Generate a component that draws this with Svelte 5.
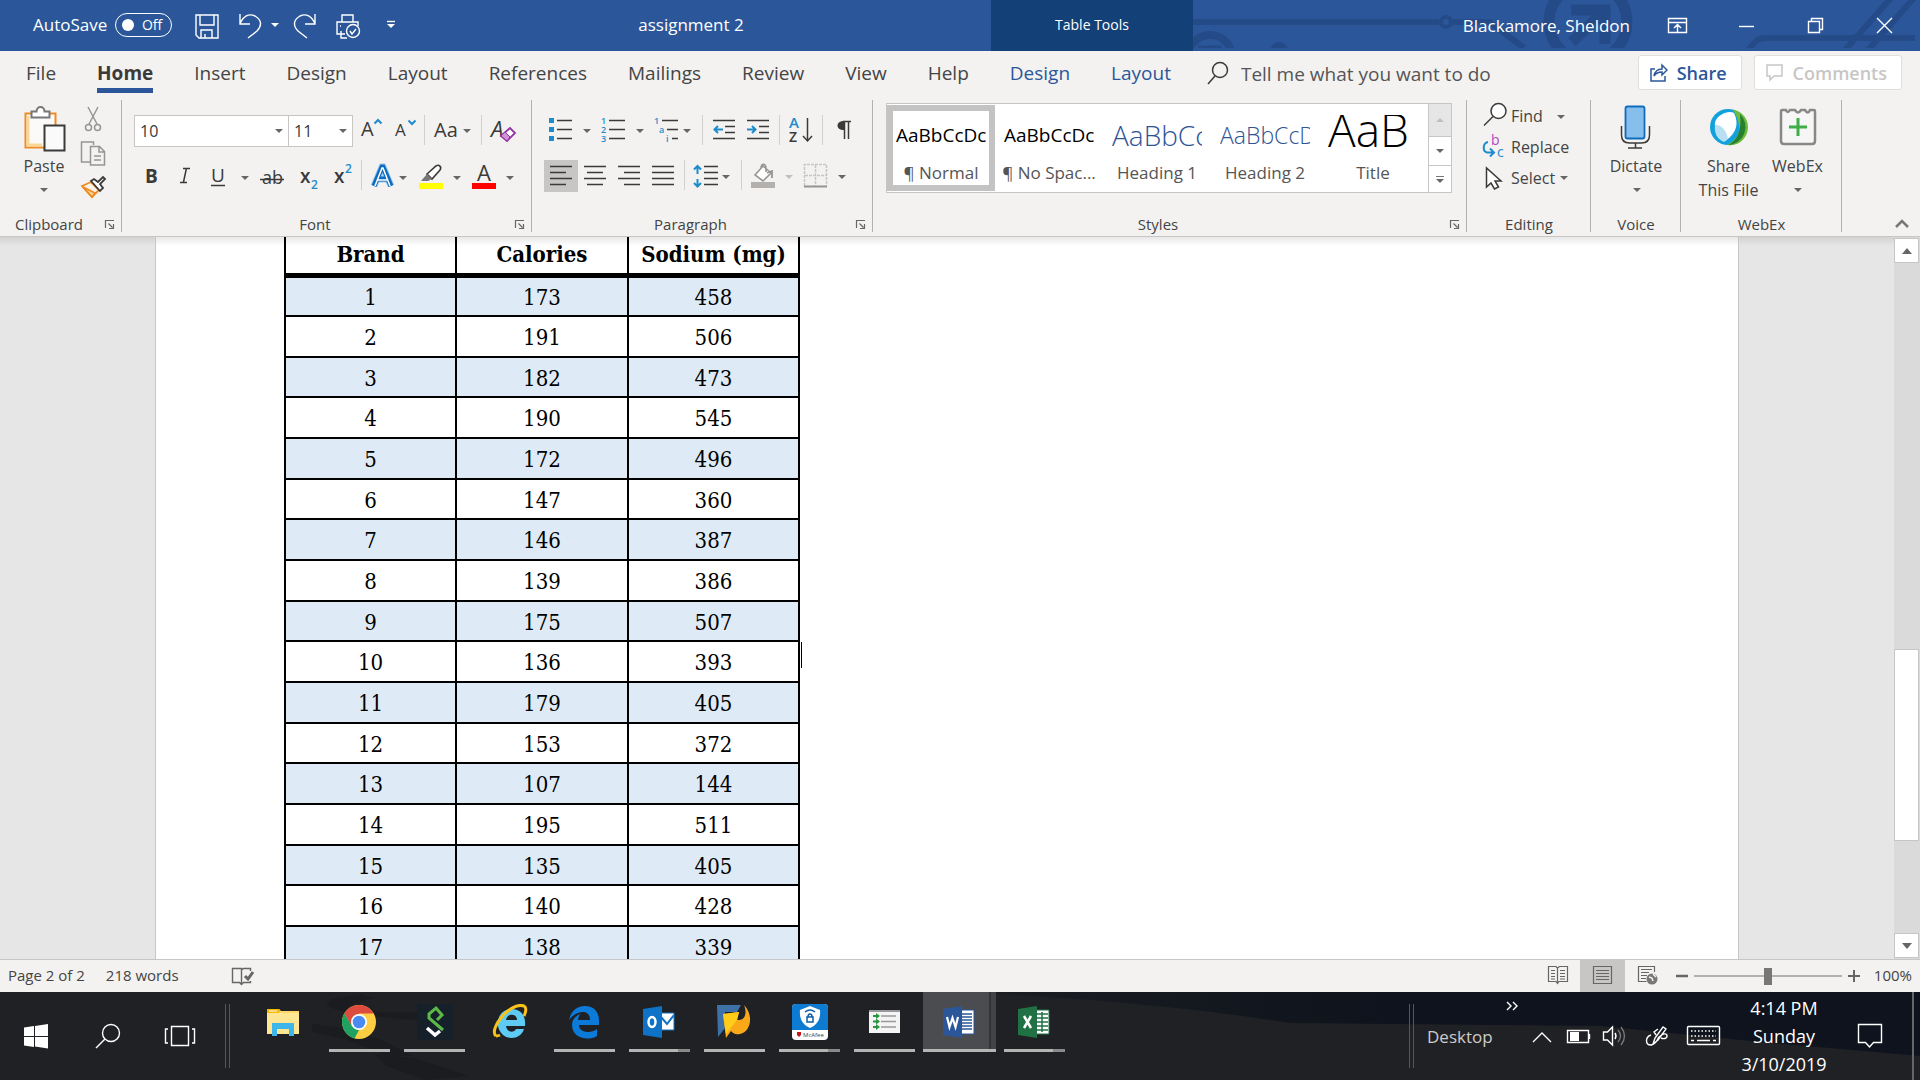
<script>
  const tabs = ['File', 'Home', 'Insert', 'Design', 'Layout', 'References', 'Mailings', 'Review', 'View', 'Help'];
  const toolTabs = ['Design', 'Layout'];
  const styles = [
    { sample: 'AaBbCcDc', name: '¶ Normal', kind: 'body', active: true },
    { sample: 'AaBbCcDc', name: '¶ No Spac...', kind: 'body' },
    { sample: 'AaBbCc', name: 'Heading 1', kind: 'h1' },
    { sample: 'AaBbCcD', name: 'Heading 2', kind: 'h2' },
    { sample: 'AaB', name: 'Title', kind: 'title' }
  ];
  const rows = [
    [173, 458], [191, 506], [182, 473], [190, 545], [172, 496], [147, 360],
    [146, 387], [139, 386], [175, 507], [136, 393], [179, 405], [153, 372],
    [107, 144], [195, 511], [135, 405], [140, 428], [138, 339]
  ];
  let zoom = $state(50);
</script>

{#snippet caret(x, y)}
  <path class="caret" d="M{x} {y}h8l-4 4z" />
{/snippet}

{#snippet footer(label, launcher)}
  <div class="foot">
    <span>{label}</span>
    {#if launcher}
      <button aria-label="{label} settings">
        <svg width="24" height="24" viewBox="0 0 24 24"><path d="M7.500 16V8.500H16M10.500 11.500l4 4M15.500 12v4.500H11" class="thin" /></svg>
      </button>
    {/if}
  </div>
{/snippet}

<div class="app">
  <header class="title">
    <div class="quick">
      <label class="auto">AutoSave <input type="checkbox" /><span class="switch">Off</span></label>
      <button aria-label="Save"><svg width="28" height="28" viewBox="193 12 28 28" class="w"><path d="M196 15h22v23h-19l-3-3zM200 15v10h14V15M201 38v-8h11v8M205 34v4" /></svg></button>
      <button aria-label="Undo"><svg width="49" height="28" viewBox="231 12 49 28" class="w"><path d="M240 14v10h10M240 24c3-8 9-11 15-8 7 4 7 10 2 15l-9 7" /><path class="fill" d="M271 23h8l-4 4z" /></svg></button>
      <button aria-label="Redo"><svg width="33" height="28" viewBox="290 12 33 28" class="w"><path d="M315 14v10h-10M315 24c-3-8-9-11-15-8-7 4-7 10-2 15l9 7" /></svg></button>
      <button aria-label="Print preview"><svg width="37" height="28" viewBox="333 12 37 28" class="w"><path d="M342 22v-7h11v7M345 34h-8V22h21v4M341 31v7h6M340 26h1" /><circle cx="353" cy="31" r="6.500" /><path d="M350 31l2 3 4-5" /></svg></button>
      <button aria-label="Customize toolbar"><svg width="16" height="28" viewBox="380 12 16 28" class="w"><path d="M387 21.500h8" /><path class="fill" d="M387 24h8l-4 4z" /></svg></button>
    </div>
    <h1>assignment 2</h1>
    <div class="context">Table Tools</div>
    <div class="user">
      <svg class="circuit" width="727" height="51" viewBox="1193 0 727 51" aria-hidden="true">
        <g fill="none" stroke="#244b88" stroke-width="6">
          <path d="M1193 22h246M1453 22h37l34 26" /><circle cx="1446" cy="22" r="5" stroke-width="4" />
          <circle cx="1210" cy="57" r="22" stroke-width="8" /><path d="M1198 47h24" stroke-width="3" /><circle cx="1279" cy="51" r="6" />
          <circle cx="1588" cy="22" r="39" stroke-width="11" />
          <path d="M1572 42l32-31M1571 10h34v34" stroke-width="11" />
          <path d="M1748 50l7-8q4-4 10-4h150M1845 50l46-52M1868 50l46-52" />
        </g>
        <path d="M1193 48h727v3h-727z" fill="#2b579a" />
      </svg>
      <span class="name">Blackamore, Sheldon</span>
      <div class="win">
        <button aria-label="Ribbon display options"><svg width="69" height="30" viewBox="1643 10 69 30" class="w"><path d="M1668.500 17.500h18v14h-18zM1668 21.500h18M1677.500 31v-7M1674 27l3.500-3.500L1681 27" /></svg></button>
        <button aria-label="Minimize"><svg width="69" height="30" viewBox="1712 10 69 30" class="w"><path d="M1739 25.500h15" /></svg></button>
        <button aria-label="Restore"><svg width="69" height="30" viewBox="1781 10 69 30" class="w"><path d="M1808.500 20.500h11v11h-11zM1811.500 20v-2.500h11v11H1820" /></svg></button>
        <button aria-label="Close"><svg width="70" height="30" viewBox="1850 10 70 30" class="w"><path d="M1877 17l15 15M1892 17l-15 15" /></svg></button>
      </div>
    </div>
  </header>

  <nav class="tabs">
    {#each tabs as t}<button class="tab" class:on={t === 'Home'}>{t}</button>{/each}
    {#each toolTabs as t}<button class="tab ctx">{t}</button>{/each}
    <label class="tell">
      <svg width="22" height="26" viewBox="0 0 22 26" class="line"><circle cx="13" cy="9" r="7.500" /><path d="M8 15l-7 8" /></svg>
      <input type="text" placeholder="Tell me what you want to do" />
    </label>
    <div class="acts">
      <button class="share"><svg width="18" height="20" viewBox="0 0 18 20"><path d="M5 6H1v12h14v-5M4 13c1-5 4-7 8-7V2l5 5-5 5V9c-4 0-6 1-8 4z" fill="none" stroke="#2b579a" stroke-width="1.500" /></svg>Share</button>
      <button class="comments"><svg width="18" height="20" viewBox="0 0 18 20"><path d="M1 2h15v11H8l-4 4v-4H1z" fill="none" stroke="#c8c6c4" stroke-width="1.500" /></svg>Comments</button>
    </div>
  </nav>

  <section class="ribbon">
    <div class="group clip">
      <div class="tools">
        <button class="big paste">
          <svg width="48" height="52" viewBox="23 102 48 52">
            <path d="M28.500 113.500h30v34h-30z" fill="#fbfaf8" stroke="#f08a24" stroke-width="2" /><path d="M31 116v29h14" fill="none" stroke="#fad796" stroke-width="3" />
            <path d="M34.500 117.500v-6h5c0-6 8-6 8 0h5v6z" fill="#fff" stroke="#777" stroke-width="2" />
            <path d="M47.500 125.500h20v25h-20z" fill="#fafafa" stroke="#3b3a39" stroke-width="2" />
          </svg>
          <span>Paste</span>
          <svg width="16" height="22" viewBox="0 0 16 22">{@render caret(4, 10)}</svg>
        </button>
        <div class="minis">
          <button aria-label="Cut"><svg width="30" height="34" viewBox="77 102 30 34" fill="none" stroke="#979593" stroke-width="1.500"><path d="M88 107l9 17M98 107l-9 17" /><circle cx="88.500" cy="127.500" r="3" /><circle cx="97.500" cy="127.500" r="3" /></svg></button>
          <button aria-label="Copy"><svg width="30" height="34" viewBox="77 137 30 34" fill="#f3f2f1" stroke="#979593" stroke-width="1.500"><path d="M90 163h-8.500v-20h12v3" /><path d="M90.500 147.500h9l5 5v13.500h-14zM99 148v5h5M94 157h7M94 161h7" /></svg></button>
          <button aria-label="Format Painter"><svg width="30" height="34" viewBox="77 171 30 34" stroke-width="1.800"><path d="M82 187l9-4 8 8-7 7z" fill="#fbf3e6" stroke="#f08a24" /><path d="M83 188l9 10 3-4z" fill="#fad796" stroke="#f08a24" /><path d="M91 182l3-2 4 3 5-5 2 2-5 5 3 4-3 3z" fill="#fff" stroke="#3b3a39" /></svg></button>
        </div>
      </div>
      {@render footer('Clipboard', true)}
    </div>

    <div class="group font">
      <div class="tools rows">
        <div class="row">
          <label class="combo wide"><select aria-label="Font name"><option>10</option></select><svg width="16" height="30" viewBox="0 0 16 30">{@render caret(3, 13)}</svg></label>
          <label class="combo"><select aria-label="Font size"><option>11</option></select><svg width="16" height="30" viewBox="0 0 16 30">{@render caret(3, 13)}</svg></label>
          <button aria-label="Grow font"><svg width="35" height="32" viewBox="353 115 35 32"><text x="361" y="136" font-size="20">A</text><path class="blue" d="M374.500 123.500l3.500-3.500 3.500 3.500" /></svg></button>
          <button aria-label="Shrink font"><svg width="36" height="32" viewBox="388 115 36 32"><text x="395" y="136" font-size="17">A</text><path class="blue" d="M408.500 120.500l3.500 3.500 3.500-3.500" /></svg></button>
          <i class="sep"></i>
          <button aria-label="Change case"><svg width="56" height="32" viewBox="425 115 56 32"><text x="434" y="137" font-size="20">Aa</text>{@render caret(463, 129)}</svg></button>
          <i class="sep"></i>
          <button aria-label="Clear formatting"><svg width="38" height="32" viewBox="482 115 38 32"><text x="491" y="137" font-size="22" font-style="italic">A</text><path d="M501 136l9-8 5 5-8 8z" fill="#fff" stroke="#9332a3" stroke-width="1.800" /><path d="M501 136l4-4 5 5-3 4z" fill="#cf93d6" stroke="#9332a3" /></svg></button>
        </div>
        <div class="row">
          <button aria-label="Bold"><svg width="34" height="32" viewBox="134 160 34 32"><text x="145" y="183" font-size="19" font-weight="700">B</text></svg></button>
          <button aria-label="Italic"><svg width="34" height="32" viewBox="168 160 34 32"><path class="line" d="M183 168.500h7M180 182.500h7M186.500 168l-3 14" /></svg></button>
          <button aria-label="Underline"><svg width="52" height="32" viewBox="202 160 52 32"><text x="211" y="182" font-size="19">U</text><path class="line" d="M211 185.500h14" />{@render caret(241, 176)}</svg></button>
          <button aria-label="Strikethrough"><svg width="35" height="32" viewBox="254 160 35 32"><text x="262" y="184" font-size="18">ab</text><path class="line" d="M260 179.500h24" /></svg></button>
          <button aria-label="Subscript"><svg width="36" height="32" viewBox="289 160 36 32"><text x="300" y="183" font-size="19" font-weight="600">x</text><text x="311" y="189" font-size="12" class="b">2</text></svg></button>
          <button aria-label="Superscript"><svg width="36" height="32" viewBox="325 160 36 32"><text x="334" y="183" font-size="19" font-weight="600">x</text><text x="345" y="173" font-size="12" class="b">2</text></svg></button>
          <i class="sep"></i>
          <button aria-label="Text effects"><svg width="50" height="32" viewBox="362 160 50 32"><path d="M374 186l8-19h1l8 19M377 179h11" fill="none" stroke="#9fcbf0" stroke-width="7" /><path d="M374 186l8-19h1l8 19M377 179h11" fill="none" stroke="#0f6cbd" stroke-width="5" /><path d="M375 186l7-18h1l7 18M377 180h11" fill="none" stroke="#fff" stroke-width="1.500" />{@render caret(399, 176)}</svg></button>
          <button aria-label="Highlight color"><svg width="54" height="32" viewBox="412 160 54 32"><path d="M419 183h24v6h-24z" fill="#ff0" /><path d="M427 174l9-8c3-2 6 1 4 4l-8 9z" fill="#fff" stroke="#3b3a39" stroke-width="1.600" /><path d="M427 174l5 5-4 2h-7z" fill="#777" />{@render caret(453, 176)}</svg></button>
          <button aria-label="Font color"><svg width="54" height="32" viewBox="466 160 54 32"><path d="M472 183h24v6h-24z" fill="red" /><text x="477" y="181" font-size="22">A</text>{@render caret(506, 176)}</svg></button>
        </div>
      </div>
      {@render footer('Font', true)}
    </div>

    <div class="group para">
      <div class="tools rows">
        <div class="row">
          <button aria-label="Bullets"><svg width="53" height="32" viewBox="544 115 53 32"><path d="M549 118h5v5h-5zM549 127h5v5h-5zM549 136h5v5h-5z" fill="#1e8bcd" /><path class="line" d="M557 120.500h15M557 129.500h15M557 138.500h15" />{@render caret(583, 129)}</svg></button>
          <button aria-label="Numbering"><svg width="53" height="32" viewBox="597 115 53 32"><g class="b" font-size="9"><text x="601" y="124">1</text><text x="601" y="133">2</text><text x="601" y="142">3</text></g><path class="line" d="M609 120.500h16M609 129.500h16M609 138.500h16" />{@render caret(636, 129)}</svg></button>
          <button aria-label="Multilevel list"><svg width="52" height="32" viewBox="650 115 52 32"><g class="b" font-size="9"><text x="654" y="124">1</text><text x="659" y="133">a</text><text x="666" y="142">i</text></g><path class="line" d="M662 120.500h16M667 129.500h11M672 138.500h6" />{@render caret(683, 129)}</svg></button>
          <i class="sep"></i>
          <button aria-label="Decrease indent"><svg width="38" height="32" viewBox="703 115 38 32"><path class="line" d="M713 120.500h22M713 138.500h22M725 126.500h10M725 132.500h10" /><path class="blue" d="M723 129.500h-8M718 126l-3.500 3.500L718 133" /></svg></button>
          <button aria-label="Increase indent"><svg width="38" height="32" viewBox="741 115 38 32"><path class="line" d="M747 120.500h22M747 138.500h22M759 126.500h10M759 132.500h10" /><path class="blue" d="M747 129.500h8M752 126l3.500 3.500L752 133" /></svg></button>
          <i class="sep"></i>
          <button aria-label="Sort"><svg width="42" height="32" viewBox="780 115 42 32"><text x="789" y="128" font-size="15" class="b">A</text><text x="789" y="142" font-size="14" font-weight="600">Z</text><path class="line" d="M807.500 118v23M803 136l4.500 5 4.500-5" /></svg></button>
          <i class="sep"></i>
          <button aria-label="Show marks"><svg width="38" height="32" viewBox="823 115 38 32"><path d="M843 121.500h8M844.500 122v17M848.500 122v17" class="line" /><path d="M845 121c-10-1-10 10 0 9z" fill="#3b3a39" /></svg></button>
        </div>
        <div class="row">
          <button class="pressed" aria-label="Align left"><svg width="34" height="32" viewBox="544 160 34 32"><path class="line" d="M550 166.500h22M550 172.500h16M550 178.500h22M550 184.500h16" /></svg></button>
          <button aria-label="Center"><svg width="34" height="32" viewBox="578 160 34 32"><path class="line" d="M584 166.500h22M587 172.500h16M584 178.500h22M587 184.500h16" /></svg></button>
          <button aria-label="Align right"><svg width="34" height="32" viewBox="612 160 34 32"><path class="line" d="M618 166.500h22M624 172.500h16M618 178.500h22M624 184.500h16" /></svg></button>
          <button aria-label="Justify"><svg width="38" height="32" viewBox="646 160 38 32"><path class="line" d="M652 166.500h22M652 172.500h22M652 178.500h22M652 184.500h22" /></svg></button>
          <i class="sep"></i>
          <button aria-label="Line spacing"><svg width="56" height="32" viewBox="685 160 56 32"><path class="blue" d="M697.500 166v8M697.500 179v8M694 169.500l3.500-3.500 3.500 3.500M694 183l3.500 3.500 3.500-3.500" /><path class="line" d="M704 166.500h14M704 172.500h14M704 178.500h14M704 184.500h14" />{@render caret(722, 175)}</svg></button>
          <i class="sep"></i>
          <button aria-label="Shading"><svg width="55" height="32" viewBox="742 160 55 32"><path d="M751 182h24v6h-24z" fill="#b3b0ad" /><path d="M755 175l8-9 8 7-8 8zM761 168c0-5 5-5 5 1v3" fill="#fff" stroke="#979593" stroke-width="1.600" /><path d="M767 173l5-2v7" fill="none" stroke="#979593" stroke-width="1.800" /><path d="M785 175h8l-4 4z" fill="#c1bfbd" /></svg></button>
          <button aria-label="Borders"><svg width="60" height="32" viewBox="797 160 60 32"><path d="M804.500 186v-21.500h22V186M805 175.500h21M815.500 165v21" fill="none" stroke="#c8c6c4" stroke-width="1.500" stroke-dasharray="3 1" /><path d="M804 186.500h23" stroke="#979593" stroke-width="2" />{@render caret(838, 175)}</svg></button>
        </div>
      </div>
      {@render footer('Paragraph', true)}
    </div>

    <div class="group styles">
      <div class="tools">
        <div class="gallery">
          <div class="cells">
            {#each styles as s}
              <button class="cell" class:active={s.active}><span class="sample {s.kind}">{s.sample}</span><span class="sname">{s.name}</span></button>
            {/each}
          </div>
          <div class="scrolls">
            <button class="off" aria-label="Previous styles"><svg width="10" height="8" viewBox="0 0 10 8"><path d="M1 6h8L5 2z" fill="#c1bfbd" /></svg></button>
            <button aria-label="Next styles"><svg width="10" height="8" viewBox="0 0 10 8">{@render caret(1, 2)}</svg></button>
            <button aria-label="More styles"><svg width="10" height="10" viewBox="0 0 10 10"><path d="M1 1.500h8" stroke="#777" />{@render caret(1, 4)}</svg></button>
          </div>
        </div>
      </div>
      {@render footer('Styles', true)}
    </div>

    <div class="group edit">
      <div class="tools list">
        <button><svg width="28" height="30" viewBox="1482 101 28 30"><circle cx="1498.500" cy="111" r="7.500" fill="#fff" stroke="#3b3a39" stroke-width="1.500" /><path class="line" d="M1493 116.500l-9 9" /></svg>Find<svg width="24" height="30" viewBox="0 0 24 30">{@render caret(14, 14)}</svg></button>
        <button><svg width="28" height="30" viewBox="1482 132 28 30"><text x="1491" y="145" font-size="14" class="keep">b</text><text x="1497" y="157" font-size="14" class="b thinb">c</text><path class="blue" d="M1488 142c-5 1-6 9-1 10.500h7M1490 148.500l4 4-4 4" /></svg>Replace</button>
        <button><svg width="28" height="30" viewBox="1482 163 28 30"><path d="M1486.500 168v19l4.500-4 3.500 6 4-2-3.500-6h6z" fill="#fff" stroke="#3b3a39" stroke-width="1.500" /></svg>Select<svg width="16" height="30" viewBox="0 0 16 30">{@render caret(5, 13)}</svg></button>
      </div>
      {@render footer('Editing', false)}
    </div>

    <div class="group voice">
      <div class="tools">
        <button class="big">
          <svg width="48" height="52" viewBox="1612 102 48 52"><rect x="1625.500" y="106.500" width="19" height="32" rx="2" fill="#86bfec" stroke="#0f6cbd" stroke-width="1.800" /><path class="line" d="M1621.500 126v9q0 8 8 8h12q8 0 8-8v-9M1635.500 143v5M1628 148h14" /></svg>
          <span>Dictate</span>
          <svg width="16" height="22" viewBox="0 0 16 22">{@render caret(5, 10)}</svg>
        </button>
      </div>
      {@render footer('Voice', false)}
    </div>

    <div class="group webex">
      <div class="tools">
        <button class="big">
          <svg width="48" height="52" viewBox="1706 102 48 52"><circle cx="1729" cy="127" r="18" fill="#12a1dc" /><path d="M1734 109.500a18 18 0 0 1-6 35.500c14-8 16-18 6-35.500z" fill="#6dbb3f" /><path d="M1741 114a18 18 0 0 1-12 31c9-4 14-14 12-31z" fill="#27802f" /><path d="M1716 122c3-8 14-12 19-9 5 10 3 20-9 28-7-3-11-10-10-19z" fill="#fff" /><path d="M1716 125c8-1 12 8 13 14l-4 3c-7-3-10-9-9-17z" fill="#b8dff2" /></svg>
          <span>Share</span><span>This File</span>
        </button>
        <button class="big">
          <svg width="48" height="52" viewBox="1774 102 48 52"><path d="M1782 110h4q1 4 4 0h5q3 5 6 0h4q3 5 5 0h4q1 0 1 2v29q0 3-3 3h-28q-3 0-3-3v-29q0-2 1-2z" fill="#f6f6f6" stroke="#8a8886" stroke-width="2.500" /><path d="M1798 118v18M1789 127h18" stroke="#3fae49" stroke-width="3" /></svg>
          <span>WebEx</span>
          <svg width="16" height="22" viewBox="0 0 16 22">{@render caret(4, 10)}</svg>
        </button>
      </div>
      {@render footer('WebEx', false)}
    </div>
    <button class="collapse" aria-label="Collapse ribbon"><svg width="16" height="10" viewBox="0 0 16 10"><path d="M2 8l6-6 6 6" fill="none" stroke="#777" stroke-width="2.500" /></svg></button>
  </section>

  <main>
    <div class="canvas">
      <article class="page">
        <table>
          <thead><tr><th scope="col">Brand</th><th scope="col">Calories</th><th scope="col">Sodium (mg)</th></tr></thead>
          <tbody>
            {#each rows as [cal, sodium], i}
              <tr><td>{i + 1}</td><td>{cal}</td><td>{sodium}</td></tr>
            {/each}
          </tbody>
        </table>
        <span class="cursor"></span>
      </article>
    </div>
    <div class="scroll">
      <button aria-label="Scroll up"><svg width="12" height="8" viewBox="0 0 12 8"><path d="M1 7h10L6 1z" fill="#666" /></svg></button>
      <span class="before"></span><span class="thumb"></span><span class="after"></span>
      <button aria-label="Scroll down"><svg width="12" height="8" viewBox="0 0 12 8"><path d="M1 1h10L6 7z" fill="#666" /></svg></button>
    </div>
  </main>

  <footer class="status">
    <span>Page 2 of 2</span><span>218 words</span>
    <button class="proof" aria-label="Proofing"><svg width="24" height="22" viewBox="0 0 24 22"><path d="M10.500 19V3.500h-9v14h7l2 2 2-2h7V16M10.500 5l2-1.500h7V6" fill="none" stroke="#666" stroke-width="1.400" /><path d="M14 11l3 3 5-7" fill="none" stroke="#666" stroke-width="3" /></svg></button>
    <div class="views">
      <button aria-label="Read mode"><svg width="45" height="32" viewBox="1536 960 45 32"><path d="M1558.500 983v-15l-1.500-1.500h-7.500v15h7.500l1.500 2 1.500-2h8.500v-15h-8l-2 1.500M1552 970.500h4M1552 973.500h4M1552 976.500h4M1552 979h4M1561 970.500h5M1561 973.500h5M1561 976.500h5M1561 979h5" class="thin" /></svg></button>
      <button class="pressed" aria-label="Print layout"><svg width="45" height="32" viewBox="1581 960 45 32"><path d="M1594.500 966.500h18v17h-18zM1597 970.500h13M1597 973.500h13M1597 976.500h13M1597 979.500h13" class="thin" /></svg></button>
      <button aria-label="Web layout"><svg width="45" height="32" viewBox="1626 960 45 32"><path d="M1655.500 972v-5.500h-16v15h8M1642 969.500h11M1642 972.500h8M1642 975.500h6M1642 978.500h5" class="thin" /><circle cx="1653" cy="979" r="5.500" fill="#777" /><path d="M1650 977l3 1 1 3M1654 974l3 3" stroke="#f3f2f1" stroke-width="1.500" fill="none" /></svg></button>
    </div>
    <button class="pm" aria-label="Zoom out"><svg width="14" height="14" viewBox="0 0 14 14"><path d="M1 7h12" stroke="#666" stroke-width="2.500" /></svg></button>
    <input type="range" min="0" max="100" bind:value={zoom} aria-label="Zoom" />
    <button class="pm" aria-label="Zoom in"><svg width="14" height="14" viewBox="0 0 14 14"><path d="M1 7h12M7 1v12" stroke="#666" stroke-width="2" /></svg></button>
    <span class="pct">100%</span>
  </footer>

  <div class="taskbar">
    <svg class="wall" viewBox="0 0 1920 88" preserveAspectRatio="none" aria-hidden="true">
      <defs><linearGradient id="night" x1="0" y1="0" x2="1" y2="0"><stop offset="0" stop-color="#1c1f22" /><stop offset="0.450" stop-color="#0e131d" /></linearGradient></defs>
      <path d="M940 0h980v64l-160-14-160-16-110-1-200-2q-160-25-350-31z" fill="url(#night)" />
      <path d="M330 8l30-6 14 4-20 6 26 8 40 0 20 4-30 4-60-6-24-8zM312 32l30 4 40 12 30 16-24 0-40-16-36-8zM374 62l40 4 56 18-44 4-40-14z" fill="#1b1c20" />
    </svg>
    <div class="sys">
      <button aria-label="Start"><svg width="72" height="40" viewBox="0 1016 72 40" fill="#fff"><path d="M24 1027.500l10-1.500v10H24zM35 1026l13-2v12H35zM24 1037h10v10l-10-1.500zM35 1037h13v11.500l-13-2z" /></svg></button>
      <button aria-label="Search"><svg width="72" height="40" viewBox="72 1016 72 40" class="w"><circle cx="111" cy="1033" r="8.500" /><path d="M105 1039l-9 9" /></svg></button>
      <button aria-label="Task view"><svg width="72" height="40" viewBox="144 1016 72 40" class="w"><path d="M171.500 1026.500h17v19h-17zM168 1029h-2.500v14h2.500M192 1029h2.500v14H192" /></svg></button>
      <i class="bars"></i>
    </div>
    <div class="apps">
      <button aria-label="File Explorer"><svg width="36" height="36" viewBox="2 0 36 36"><path d="M2 5h12l2 2h18v23H2z" fill="#ffd968" /><path d="M2 9h32v21H2z" fill="#ffe693" /><path d="M2 5h11q2 0 2 3l-2 1H2z" fill="#f9b800" /><path d="M4 7h8" stroke="#fff" /><path d="M7 32V19h22v13h-5v-7h-12v7z" fill="#3eb6ea" /></svg></button>
      <button aria-label="Chrome" class="run"><svg width="36" height="36" viewBox="1 0 36 36"><circle cx="18" cy="18" r="17" fill="#ffcd41" /><path d="M18 9.500h14.700A17 17 0 0 0 3.300 9.500l7 12z" fill="#dd4b3e" /><path d="M3.300 9.500l7.500 12.500 7.200 4-4.500 8.400A17 17 0 0 1 3.300 9.500z" fill="#1da261" /><circle cx="18" cy="18" r="8" fill="#fff" /><circle cx="18" cy="18" r="6.300" fill="#4a8af4" /></svg></button>
      <button aria-label="S launcher" class="run"><svg width="36" height="36" viewBox="0 0 36 36"><rect width="36" height="36" rx="2" fill="#16202b" /><path d="M20 16l5-5-6-7-7 6v4l14 12" fill="none" stroke="#5cb947" stroke-width="3" /><path d="M10 24l8 7 5-4" fill="none" stroke="#fff" stroke-width="3.500" /></svg></button>
      <button aria-label="Internet Explorer"><svg width="36" height="36" viewBox="1 0 36 36"><path d="M34 22H15c1 7 8 7 10 3h8C30 35 18 36 12 31 2 22 7 5 21 5c9 0 14 7 13 17zM15 16h11c0-7-10-7-11 0z" fill="#5ecbf4" /><path d="M5 32C-3 25 20-3 33 2c4 2 0 10 0 10M9 31c-2 1-3 1-4 1" fill="none" stroke="#f8c21b" stroke-width="3" /></svg></button>
      <button aria-label="Edge" class="run"><svg width="36" height="36" viewBox="1 0 36 36"><path d="M3 16C5 7 11 2 19 2c10 0 14 7 14 15v4H13c0 8 12 9 18 4v7C20 38 6 33 6 21c0-6 4-9 8-11-1 2-2 4-2 6h12C24 4 9 7 3 16z" fill="#0b7ad8" /></svg></button>
      <button aria-label="Outlook" class="run multi"><svg width="36" height="36" viewBox="1 0 36 36"><path d="M20 9h13v17H20z" fill="#fff" stroke="#0e72c6" /><path d="M20 13l6 7 7-9" fill="none" stroke="#0e72c6" stroke-width="2" /><path d="M2 5l19-3v32L2 31z" fill="#0e72c6" /><ellipse cx="11" cy="18" rx="3.500" ry="5" fill="none" stroke="#fff" stroke-width="2.500" /></svg></button>
      <button aria-label="Converter" class="run"><svg width="36" height="36" viewBox="1 0 36 36"><path d="M1 1h24l-4 7H9v16l-7 9z" fill="#3d71a8" /><path d="M7 10l16-2-2 8c9 1 10-8 7-15 10 10 7 27-4 29-5 1-7-1-9-3l-5 7z" fill="#f9a81a" /><path d="M7 10l16-2-2 8-11 14z" fill="#ffcc1a" /></svg></button>
      <button aria-label="McAfee" class="run multi"><svg width="36" height="36" viewBox="0 0 36 36"><rect width="36" height="36" rx="4" fill="#fff" /><path d="M0 26V4q0-4 4-4h28q4 0 4 4v22z" fill="#0d7bd2" /><path d="M18 2l10 4c1 9-3 15-10 18C11 21 7 15 8 6z" fill="#fff" /><path d="M15 13h6v5h-6zM16 13q0-3 2-3t2 3M13 8q5-4 10 0" fill="none" stroke="#0d5ca8" stroke-width="1.500" /><path d="M5 28h4v3l-2 2-2-2z" fill="#c01818" /><text x="11" y="33" class="mc">McAfee</text></svg></button>
      <button aria-label="Task list" class="run"><svg width="36" height="36" viewBox="1 0 36 36"><path d="M3 6h31v23H3z" fill="#f4f4f4" /><path d="M3 6h31v2H3z" fill="#999" /><path d="M15 12h15M15 17.500h15M15 23h15" stroke="#999" stroke-width="1.500" /><path d="M7 12h4M7 17.500h4M7 23h4" stroke="#29963f" stroke-width="2" /><path d="M10 9l4 3-4 3zM10 14.500l4 3-4 3zM10 20l4 3-4 3z" fill="#29963f" /></svg></button>
      <button aria-label="Word" class="run here"><svg width="36" height="36" viewBox="1 0 36 36"><path d="M19 6h14v24H19z" fill="#fff" stroke="#2b579a" /><path d="M21 10h10M21 13h10M21 16h10M21 19h10M21 22h10M21 25h10" stroke="#2b579a" stroke-width="1.500" /><path d="M2 5l19-3v32L2 31z" fill="#2b579a" /><path d="M6 13l2.500 10 3-9 3 9 2.500-10" fill="none" stroke="#fff" stroke-width="2.200" /></svg></button>
      <button aria-label="Excel" class="run multi"><svg width="36" height="36" viewBox="1 0 36 36"><path d="M19 6h14v24H19z" fill="#fff" stroke="#207245" /><path d="M21 10h11M21 14h11M21 18h11M21 22h11M21 26h11M26 8v20" stroke="#207245" stroke-width="1.500" /><path d="M2 5l19-3v32L2 31z" fill="#207245" /><path d="M8 12l7 12M15 12L8 24" stroke="#fff" stroke-width="2.500" /></svg></button>
    </div>
    <div class="tray">
      <i class="bars"></i>
      <button class="desk">Desktop</button>
      <button class="chev" aria-label="More toolbars"><svg width="14" height="14" viewBox="0 0 14 14" class="w"><path d="M2 2l4 4-4 4M8 2l4 4-4 4" /></svg></button>
      <button aria-label="Hidden icons"><svg width="34" height="40" viewBox="1525 1016 34 40" class="w"><path d="M1533 1042l9-9 9 9" /></svg></button>
      <button aria-label="Battery"><svg width="38" height="40" viewBox="1559 1016 38 40" class="w"><path d="M1567.500 1030.500h21v12h-21zM1589.500 1034v5" /><path d="M1570 1032h9v9h-9z" class="fill" /></svg></button>
      <button aria-label="Volume"><svg width="40" height="40" viewBox="1597 1016 40 40" class="w"><path d="M1603.500 1032h4l5-5v18l-5-5h-4zM1615 1033q2 3 0 6" /><path d="M1618 1030q5 6 0 12M1621 1027q7 9 0 18" stroke="#777" /></svg></button>
      <button aria-label="Pen"><svg width="40" height="40" viewBox="1637 1016 40 40" class="w"><path d="M1653 1044l2-6 8-11 3 2-8 11zM1651 1035c-6 2-6 10 0 10 6-1 6-6 8-8 4-4 8-4 8-1s-4 3-6 2M1658 1029l-4 3 2 3" /></svg></button>
      <button aria-label="Keyboard"><svg width="54" height="40" viewBox="1677 1016 54 40" class="w"><rect x="1687.500" y="1026.500" width="32" height="18" rx="1" /><path d="M1691 1031h25M1691 1036h25" stroke-dasharray="1.500 2" /><path d="M1691 1040.500h3M1697 1040.500h13M1713 1040.500h3" /></svg></button>
      <div class="clock"><span>4:14 PM</span><span>Sunday</span><span>3/10/2019</span></div>
      <button aria-label="Notifications"><svg width="75" height="40" viewBox="1837 1016 75 40" class="w"><path d="M1858.500 1024.500h23v18h-8l-4 4.500-4-4.500h-7z" /></svg></button>
      <button class="show" aria-label="Show desktop"></button>
    </div>
  </div>
</div>

<style>
  :global(body) { margin: 0; }
  * { box-sizing: border-box; }
  .app { height: 100vh; display: flex; flex-direction: column; overflow: hidden; font-family: "Open Sans", "Noto Sans", sans-serif; font-size: 16px; color: #444; }
  button { border: 0; padding: 0; background: none; font: inherit; color: inherit; display: flex; align-items: center; justify-content: center; flex: none; }
  svg { display: block; flex: none; }
  .row svg { overflow: visible; }
  svg text { fill: #3b3a39; }
  svg .b, svg .b text { fill: #1e8bcd; font-weight: 600; }
  svg .thinb { font-weight: 400; }
  svg .keep { fill: #b146c2; }
  svg .mc { fill: #444; font-size: 6px; }
  .caret { fill: #666; }
  .w { fill: none; stroke: #fff; stroke-width: 1.4; }
  .w .fill { fill: #fff; stroke: none; }
  .line { fill: none; stroke: #3b3a39; stroke-width: 1.5; }
  .blue { fill: none; stroke: #1e8bcd; stroke-width: 2; }
  .thin { fill: none; stroke: #666; stroke-width: 1.2; }

  .title { flex: none; height: 51px; display: flex; background: #2b579a; color: #fff; font-size: 17px; }
  .quick { flex: 0 0 391px; min-width: 0; width: 391px; display: flex; align-items: center; padding-left: 33px; gap: 10px; }
  .auto { display: flex; align-items: center; gap: 8px; margin-right: 10px; padding-bottom: 2px; width: 140px; flex: none; }
  .auto input { position: absolute; opacity: 0; width: 1px; height: 1px; }
  .switch { width: 57px; height: 24px; border: 1px solid #fff; border-radius: 12px; display: flex; align-items: center; justify-content: space-between; padding: 0 9px 0 6px; font-size: 14px; }
  .switch::before { content: ""; width: 12px; height: 12px; border-radius: 50%; background: #fff; }
  h1 { flex: 600 1 0; margin: 0; padding-bottom: 2px; font-size: 17px; font-weight: 400; display: flex; align-items: center; justify-content: center; }
  .context { flex: 0 0 202px; padding-bottom: 2px; background: #144078; display: flex; align-items: center; justify-content: center; font-size: 14px; }
  .user { flex: 727 1 0; position: relative; display: flex; align-items: center; justify-content: flex-end; overflow: hidden; }
  .circuit { position: absolute; right: 0; top: 0; }
  .name { position: relative; margin-right: 13px; white-space: nowrap; }
  .win { position: relative; display: flex; }
  .title > .context, .title > .quick { box-sizing: border-box; }

  .tabs { flex: none; height: 47px; display: flex; align-items: stretch; background: #f3f2f1; padding: 0 18px 0 26px; gap: 41px; font-size: 19px; }
  .tab { border-bottom: 5px solid transparent; margin-bottom: 5px; padding-top: 7px; }
  .tab.on { font-weight: 700; border-color: #2b579a; color: #3b3a39; }
  .tab.ctx { color: #2b579a; }
  .tell { display: flex; align-items: center; gap: 12px; flex: 1; margin-left: -5px; padding-bottom: 2px; }
  .tell input { flex: 1; min-width: 0; border: 0; padding: 0; background: none; font: inherit; color: inherit; }
  .tell input::placeholder { color: #555; opacity: 1; }
  .acts { display: flex; gap: 12px; padding: 4px 0 8px; font-size: 18px; font-weight: 600; }
  .acts button { background: #fff; border: 1px solid #e1dfdd; border-radius: 3px; padding: 0 14px 0 11px; gap: 9px; }
  .share { color: #2b579a; }
  .comments { color: #c8c6c4; }

  .ribbon { flex: none; display: flex; background: #f3f2f1; border-bottom: 1px solid #c8c6c4; }
  .group { display: flex; flex-direction: column; flex: none; position: relative; }
  .group::after { content: ""; position: absolute; right: 0; top: 2px; bottom: 4px; width: 1px; background: #b3b0ad; }
  .tools { height: 114px; display: flex; align-items: flex-start; }
  .foot { height: 24px; display: flex; font-size: 15px; line-height: 24px; }
  .foot span { flex: 1; text-align: center; }
  .clip { width: 122px; }
  .font { width: 410px; }
  .para { width: 341px; }
  .styles { flex: 1 1 594px; }
  .edit { width: 124px; }
  .voice { width: 90px; }
  .webex { width: 161px; }
  .rows { flex-direction: column; gap: 13px; padding: 17px 0 0 12px; }
  .row { display: flex; height: 32px; }
  .sep { width: 1px; height: 30px; background: #d2d0ce; }
  .pressed { background: #c8c6c4; }
  .combo { display: grid; width: 65px; margin-left: -1px; border: 1px solid #c8c6c4; background: #fff; }
  .combo.wide { width: 155px; margin-left: 0; }
  .combo select, .combo svg { grid-area: 1 / 1; }
  .combo svg { justify-self: end; pointer-events: none; }
  .combo select { appearance: none; border: 0; background: none; padding: 0 5px; font: inherit; color: #3b3a39; }
  .big { flex-direction: column; justify-content: flex-start; padding-top: 4px; line-height: 24px; width: 69px; }
  .clip .tools { padding-left: 11px; }
  .paste { width: 66px; }
  .minis { padding-top: 4px; display: grid; }
  .voice .tools { justify-content: center; }
  .webex .tools { padding-left: 13px; }
  .list { flex-direction: column; gap: 1px; padding: 3px 0 0 15px; }
  .list button > svg:first-child { margin-right: 1px; }
  .collapse { align-self: flex-end; flex: 1 0 78px; justify-content: flex-end; padding: 0 10px 7px 0; }

  .gallery { flex: 1; display: flex; margin: 5px 15px 0 13px; height: 90px; }
  .cells { flex: 1; display: flex; overflow: hidden; background: #fff; border: 1px solid #c8c6c4; border-right: 0; }
  .cell { width: 108px; height: 86px; margin-top: 1px; border: 6px solid transparent; flex-direction: column; justify-content: flex-start; }
  .cell.active { border-color: #c3c3c3; }
  .sample { flex: none; width: 90px; height: 40px; margin-top: 4px; overflow: hidden; text-align: left; font-size: 19px; line-height: 40px; color: #000; white-space: nowrap; }
  .sample.h1 { font-size: 28px; font-weight: 300; color: #2f5496; }
  .sample.h2 { font-size: 23px; font-weight: 300; color: #2f5496; }
  .sample.title { font-size: 46px; font-weight: 300; line-height: 28px; display: block; background: none; }
  .sname { margin-top: 5px; font-size: 17px; line-height: 25px; color: #555; white-space: nowrap; }
  .scrolls { width: 24px; display: grid; grid-template-rows: 32px 28px 28px; border: 1px solid #c8c6c4; background: #c8c6c4; gap: 1px; overflow: hidden; }
  .scrolls button { background: #fff; }
  .scrolls .off { background: #e6e6e6; }

  main { flex: 1; min-height: 0; display: flex; background: linear-gradient(#d2d2d2, #e6e6e6 9px); }
  .canvas { flex: 1; overflow: hidden; padding: 0 155px; }
  .page { height: 100%; border: solid #c6c6c6; border-width: 0 1px; background: linear-gradient(#e8e8e8, #fff 9px); padding-left: 128px; display: flex; align-items: flex-start; }
  table { flex: none; border-spacing: 0; border-right: 2px solid #000; font: 22px "DejaVu Serif Condensed", "Liberation Serif", serif; color: #000; }
  th, td { width: 171px; height: 41px; padding: 3px 0 0; text-align: center; line-height: 28px; border: solid #000; border-width: 0 0 2px 2px; }
  th { border-bottom-width: 5px; padding: 0 0 2px; }
  th:nth-child(2) { width: 172px; }
  tbody tr:nth-child(odd) td { background: #deeaf6; }
  tbody tr:nth-child(3n) td { height: 40px; }
  tbody tr:first-child td { height: 39px; }
  .cursor { margin: 405px 0 0 1px; width: 1px; height: 26px; background: #000; }
  .scroll { flex: none; width: 26px; padding: 1px 1px 1px 0; display: flex; flex-direction: column; background: #dadada; }
  .scroll button { height: 25px; background: #fff; border: 1px solid #c6c6c6; }
  .before { flex: 387; }
  .thumb { flex: 191; background: #fff; border: 1px solid #c6c6c6; }
  .after { flex: 92; }

  .status { flex: none; height: 33px; display: flex; align-items: center; background: #f3f2f1; border-top: 1px solid #c6c6c6; font-size: 15px; padding: 0 8px; }
  .status span { margin-right: 21px; padding-bottom: 2px; }
  .proof { margin-left: 31px; }
  .views { display: flex; margin-left: auto; }
  .pm { width: 24px; }
  .status input { appearance: none; width: 148px; height: 18px; margin: 0; background: linear-gradient(#b3b0ad, #b3b0ad) center / 100% 2px no-repeat; }
  .status input::-webkit-slider-thumb { appearance: none; width: 8px; height: 17px; background: #777; }
  .status .pct { margin: 0; width: 46px; text-align: right; }

  .taskbar { flex: none; height: 88px; position: relative; display: flex; align-items: stretch; background: #202124; color: #fff; }
  .wall { position: absolute; inset: 0; width: 100%; height: 100%; }
  .sys, .apps, .tray { position: relative; display: flex; align-items: center; }
  .bars { width: 5px; height: 64px; border: solid #55565a; border-width: 0 1px; margin-left: 9px; }
  .apps { margin-left: 24px; gap: 14px; align-items: flex-start; }
  .apps button { width: 61px; height: 60px; padding: 12px 0 9px; border-bottom: 3px solid transparent; }
  .apps .run { border-color: #b4b4b4; }
  .apps .multi { border-image: linear-gradient(90deg, #b4b4b4 47px, #8a8a8a 47px) 3; border-style: solid; border-width: 0 0 3px; }
  .apps .here { width: 73px; margin: 0 -6px; background: linear-gradient(90deg, #4b4c4f 66px, #333437 66px, #333437 68px, #424346 68px); }
  .tray { margin-left: auto; }
  .tray .bars { margin: 0 13px 0 0; }
  .desk { width: 72px; justify-content: flex-start; font-size: 17px; color: #ccc; }
  .chev { align-self: flex-start; margin-top: 8px; width: 26px; }
  .clock { width: 106px; display: flex; flex-direction: column; text-align: center; font-size: 18px; line-height: 28px; }
  .show { width: 8px; align-self: stretch; border-left: 2px solid #666; }
</style>
